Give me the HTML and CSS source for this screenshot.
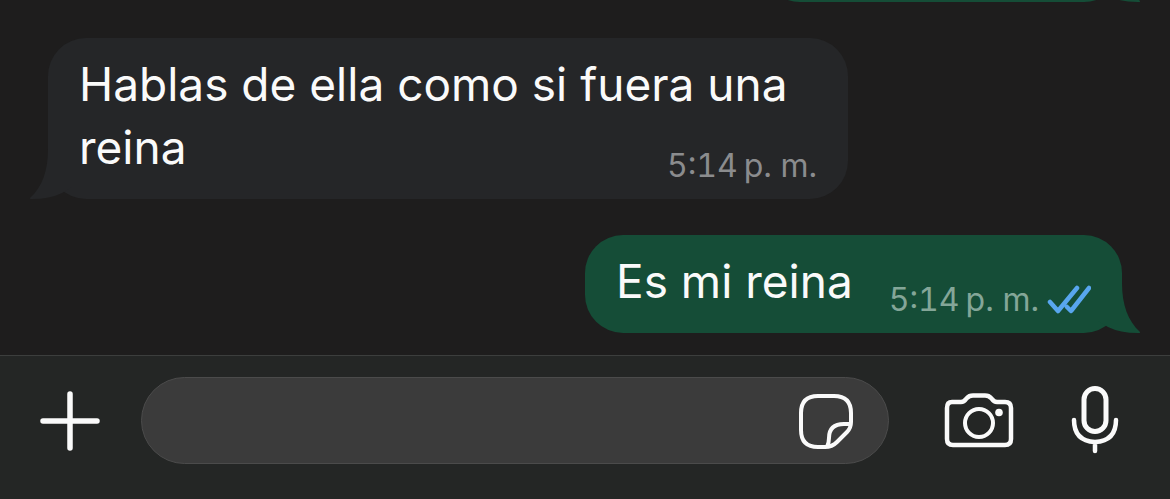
FILE: index.html
```html
<!DOCTYPE html>
<html lang="es">
<head>
<meta charset="utf-8">
<meta name="viewport" content="width=device-width, initial-scale=1">
<title>Chat</title>
<link rel="stylesheet" href="styles.css">
</head>
<body>
<main class="chat">
  <div class="bubble bubble--out bubble--previous" aria-hidden="true">
    <svg class="tail tail--out" viewBox="0 0 42 50"><path d="M24 0C24 22 30 38 42 49Q43 50 40 50Q22 50 10 44L0 38V0Z"/></svg>
  </div>
  <article class="bubble bubble--in">
    <svg class="tail tail--in" viewBox="0 0 42 50" aria-hidden="true"><path d="M18 0C18 22 12 38 0 49Q-1 50 2 50Q20 50 32 44L42 38V0Z"/></svg>
    <span class="text">Hablas de ella como si fuera una reina</span>
    <div class="meta"><time datetime="17:14"><span>5:14</span><span>p. m.</span></time></div>
  </article>
  <article class="bubble bubble--out">
    <svg class="tail tail--out" viewBox="0 0 42 50" aria-hidden="true"><path d="M24 0C24 22 30 38 42 49Q43 50 40 50Q22 50 10 44L0 38V0Z"/></svg>
    <span class="text">Es mi reina</span>
    <div class="meta">
      <time datetime="17:14"><span>5:14</span><span>p. m.</span></time>
      <svg class="ticks" viewBox="0 0 44 30" role="img" aria-label="Leído"><path d="M3 17L11 26L30 3M20 22L24 26L42 3"/></svg>
    </div>
  </article>
</main>
<form class="composer">
  <button class="icon-button" type="button" aria-label="Adjuntar">
    <svg width="60" height="60" viewBox="0 0 60 60"><path stroke-width="5.5" d="M30 3V57M3 30H57"/></svg>
  </button>
  <div class="field">
    <input class="field__input" type="text" aria-label="Mensaje">
    <button class="icon-button" type="button" aria-label="Stickers">
      <svg width="56" height="56" viewBox="0 0 56 56"><path stroke-width="4" d="M20 3H36Q53 3 53 20V29Q53 35 49 39L39 49Q34 54 27 54H20Q3 54 3 37V20Q3 3 20 3ZM52 31H46Q31 31 31 45Q31 50 29 54"/></svg>
    </button>
  </div>
  <button class="icon-button" type="button" aria-label="Cámara">
    <svg width="70" height="56" viewBox="0 0 70 56"><path stroke-width="4.5" d="M8 9H17Q20 9 22 6L23 5Q25 2.500 29 2.500H41Q45 2.500 47 5L48 6Q50 9 53 9H61Q67 9 67 15V46Q67 52 61 52H9Q3 52 3 46V15Q3 9 8 9Z"/><circle cx="35" cy="30" r="14" stroke-width="4"/><circle class="dot" cx="55" cy="19.500" r="3.800"/></svg>
  </button>
  <button class="icon-button" type="button" aria-label="Grabar audio">
    <svg width="48" height="70" viewBox="0 0 48 70"><rect x="13" y="2.500" width="22" height="43" rx="11" stroke-width="5"/><path stroke-width="4.500" d="M3 34Q3 55 24 56Q45 55 45 34M24 56V65"/></svg>
  </button>
</form>
</body>
</html>
```

FILE: styles.css
```css
* { box-sizing: border-box; }

body {
  margin: 0;
  height: 100vh;
  display: flex;
  flex-direction: column;
  overflow: hidden;
  background: #1e1d1d;
  color: #fafafa;
  font-family: Inter, "Liberation Sans", sans-serif;
}

.chat {
  flex: 1;
  min-height: 0;
  display: flex;
  flex-direction: column;
  justify-content: flex-end;
  gap: 36px;
  padding: 0 48px 22px;
  overflow: hidden;
}

.bubble {
  position: relative;
  flex: none;
  padding: 15px 31px 17px;
  border-radius: 38px;
}

.bubble--in {
  display: flow-root;
  align-self: flex-start;
  width: 74.5%;
  padding-bottom: 20px;
  font-size: 46px;
  line-height: 63px;
  background: #252628;
  fill: #252628;
}

.bubble--in > .meta {
  float: right;
  margin-top: 34px;
  margin-bottom: -3px;
  color: #8b8c8e;
}

.bubble--out {
  display: flex;
  align-items: flex-end;
  align-self: flex-end;
  gap: 36px;
  background: #154d37;
  fill: #154d37;
}

.bubble--out > .text { padding-bottom: 3px; }

.bubble--out > .meta { color: #84a698; }

.bubble--previous {
  width: 360px;
  height: 98px;
}

.tail {
  position: absolute;
  bottom: 0;
  width: 42px;
  height: 50px;
}

.tail--in { left: -18px; }
.tail--out { right: -18px; }

.text {
  font-size: 46px;
  line-height: 63px;
}

.meta {
  display: flex;
  align-items: center;
  gap: 8px;
  font-size: 32px;
  line-height: 32px;
  font-variant-numeric: tabular-nums;
}

time {
  display: flex;
  gap: 6px;
  white-space: nowrap;
}

.ticks {
  width: 44px;
  height: 30px;
  fill: none;
  stroke: #58a6ee;
  stroke-width: 4.5;
  stroke-linecap: round;
  stroke-linejoin: round;
}

.composer {
  flex: none;
  display: flex;
  align-items: center;
  padding: 21px 51px 35px 40px;
  border-top: 1px solid #3c3e3d;
  background: #242625;
}

.icon-button {
  flex: none;
  display: flex;
  padding: 0;
  border: 0;
  background: none;
  fill: none;
  stroke: #fafafa;
  stroke-linecap: round;
  stroke-linejoin: round;
}

.dot {
  fill: #fafafa;
  stroke: none;
}

.field {
  flex: 1;
  min-width: 0;
  height: 87px;
  display: flex;
  align-items: center;
  margin: 0 55px 0 41px;
  padding: 0 34px;
  border: 1px solid #4b4b4b;
  border-radius: 44px;
  background: #3b3b3b;
}

.field__input {
  flex: 1;
  min-width: 0;
  height: 100%;
  padding: 0;
  border: 0;
  outline: 0;
  background: transparent;
  color: inherit;
  font: inherit;
  font-size: 46px;
}

.field + .icon-button { margin-right: 57px; }
```
